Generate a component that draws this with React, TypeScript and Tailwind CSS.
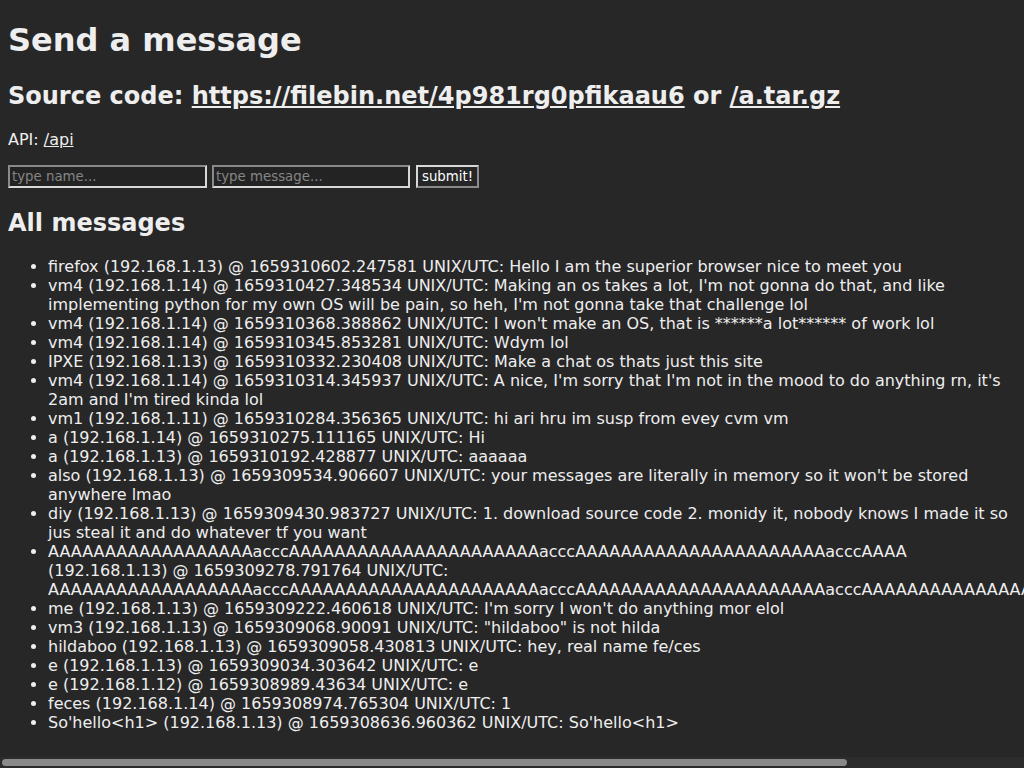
const NAME_A =
  "A".repeat(18) + "accc" + "A".repeat(22) + "accc" + "A".repeat(22) + "accc" + "AAAA";
const MSG_A =
  "A".repeat(18) + "accc" + "A".repeat(22) + "accc" + "A".repeat(22) + "accc" + "A".repeat(22) + "accc" + "A".repeat(10);

const messages: [string, string, string, string][] = [
  ["firefox", "192.168.1.13", "1659310602.247581", "Hello I am the superior browser nice to meet you"],
  ["vm4", "192.168.1.14", "1659310427.348534", "Making an os takes a lot, I'm not gonna do that, and like implementing python for my own OS will be pain, so heh, I'm not gonna take that challenge lol"],
  ["vm4", "192.168.1.14", "1659310368.388862", "I won't make an OS, that is ******a lot****** of work lol"],
  ["vm4", "192.168.1.14", "1659310345.853281", "Wdym lol"],
  ["IPXE", "192.168.1.13", "1659310332.230408", "Make a chat os thats just this site"],
  ["vm4", "192.168.1.14", "1659310314.345937", "A nice, I'm sorry that I'm not in the mood to do anything rn, it's 2am and I'm tired kinda lol"],
  ["vm1", "192.168.1.11", "1659310284.356365", "hi ari hru im susp from evey cvm vm"],
  ["a", "192.168.1.14", "1659310275.111165", "Hi"],
  ["a", "192.168.1.13", "1659310192.428877", "aaaaaa"],
  ["also", "192.168.1.13", "1659309534.906607", "your messages are literally in memory so it won't be stored anywhere lmao"],
  ["diy", "192.168.1.13", "1659309430.983727", "1. download source code 2. monidy it, nobody knows I made it so jus steal it and do whatever tf you want"],
  [NAME_A, "192.168.1.13", "1659309278.791764", MSG_A],
  ["me", "192.168.1.13", "1659309222.460618", "I'm sorry I won't do anything mor elol"],
  ["vm3", "192.168.1.13", "1659309068.90091", "\"hildaboo\" is not hilda"],
  ["hildaboo", "192.168.1.13", "1659309058.430813", "hey, real name fe/ces"],
  ["e", "192.168.1.13", "1659309034.303642", "e"],
  ["e", "192.168.1.12", "1659308989.43634", "e"],
  ["feces", "192.168.1.14", "1659308974.765304", "1"],
  ["So'hello<h1>", "192.168.1.13", "1659308636.960362", "So'hello<h1>"],
];

export default function App() {
  return (
    <div className="h-screen flex flex-col bg-[#272727] text-[#eeeeee] text-[16px] font-['DejaVu_Sans',sans-serif] leading-[normal]">
      <div className="flex-1 overflow-hidden px-2">
        <h1 className="text-[32px] leading-[normal] font-bold mt-[21.44px] mb-[23px]">Send a message</h1>
        <h2 className="text-[24px] leading-[normal] font-bold mb-[19.92px]">
          Source code:{" "}
          <a href="#" className="underline">
            https://filebin.net/4p981rg0pfikaau6
          </a>{" "}
          or{" "}
          <a href="#" className="underline">
            /a.tar.gz
          </a>
        </h2>
        <p className="leading-[normal] mt-[14px] mb-[15px]">
          API:{" "}
          <a href="#" className="underline">
            /api
          </a>
        </p>
        <form className="flex items-start pt-[1px] h-[24px]" onSubmit={(e) => e.preventDefault()}>
          <input
            placeholder="type name..."
            className="w-[199px] h-[23px] px-[2px] text-[13.33px] leading-[normal] bg-[#232323] border-2 border-t-[#8a8a8a] border-l-[#8a8a8a] border-b-[#d8d8d8] border-r-[#d8d8d8] placeholder:text-[#858585] outline-none"
          />
          <input
            placeholder="type message..."
            className="ml-[5px] w-[198px] h-[23px] px-[2px] text-[13.33px] leading-[normal] bg-[#232323] border-2 border-t-[#8a8a8a] border-l-[#8a8a8a] border-b-[#d8d8d8] border-r-[#d8d8d8] placeholder:text-[#858585] outline-none"
          />
          <button
            type="submit"
            className="ml-[6px] w-[63px] h-[23px] text-[13.33px] leading-[normal] text-white bg-[#262626] border-2 border-t-[#d8d8d8] border-l-[#d8d8d8] border-b-[#8a8a8a] border-r-[#8a8a8a]"
          >
            submit!
          </button>
        </form>
        <h2 className="text-[24px] leading-[normal] font-bold mt-[20.5px] mb-[19.92px]">All messages</h2>
        <ul className="list-disc pl-10 mt-[16.5px] mb-4 leading-[normal]">
          {messages.map(([name, ip, ts, msg], i) => (
            <li key={i}>
              {name} ({ip}) @ {ts} UNIX/UTC: {msg}
            </li>
          ))}
        </ul>
      </div>
      <div className="h-[11px] bg-[#2c2c2c] flex items-center">
        <div className="ml-[2px] w-[845px] h-[7px] rounded-full bg-[#8a8a8a]" />
      </div>
    </div>
  );
}
